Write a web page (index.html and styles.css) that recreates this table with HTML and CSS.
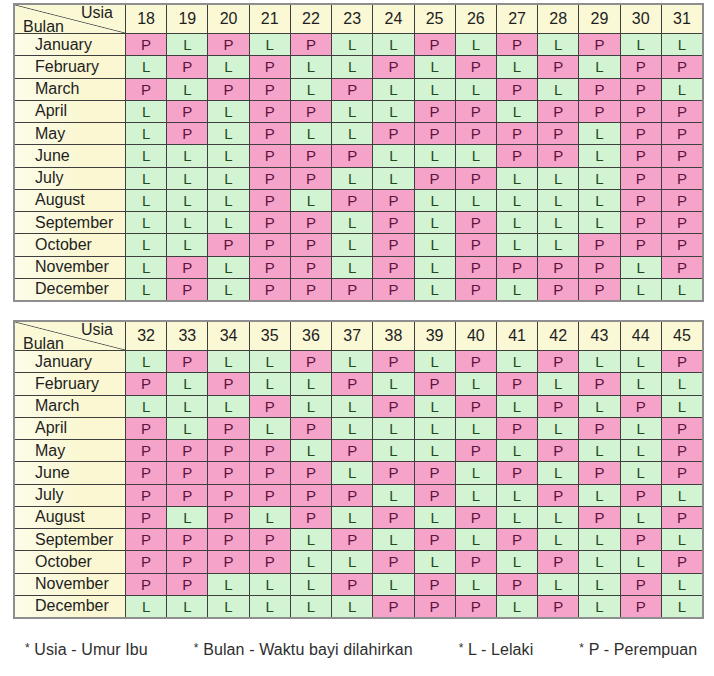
FILE: index.html
```html
<!DOCTYPE html>
<html>
<head>
<meta charset="utf-8">
<link rel="stylesheet" href="styles.css">
</head>
<body>
<div class="page">
  <div class="chart">
    <div class="corner"><span class="usia">Usia</span><span class="bulan">Bulan</span></div>
    <div class="age">18</div><div class="age">19</div><div class="age">20</div><div class="age">21</div><div class="age">22</div><div class="age">23</div><div class="age">24</div><div class="age">25</div><div class="age">26</div><div class="age">27</div><div class="age">28</div><div class="age">29</div><div class="age">30</div><div class="age">31</div>
    <div class="month">January</div><div class="p">P</div><div class="l">L</div><div class="p">P</div><div class="l">L</div><div class="p">P</div><div class="l">L</div><div class="l">L</div><div class="p">P</div><div class="l">L</div><div class="p">P</div><div class="l">L</div><div class="p">P</div><div class="l">L</div><div class="l">L</div>
    <div class="month">February</div><div class="l">L</div><div class="p">P</div><div class="l">L</div><div class="p">P</div><div class="l">L</div><div class="l">L</div><div class="p">P</div><div class="l">L</div><div class="p">P</div><div class="l">L</div><div class="p">P</div><div class="l">L</div><div class="p">P</div><div class="p">P</div>
    <div class="month">March</div><div class="p">P</div><div class="l">L</div><div class="p">P</div><div class="p">P</div><div class="l">L</div><div class="p">P</div><div class="l">L</div><div class="l">L</div><div class="l">L</div><div class="p">P</div><div class="l">L</div><div class="p">P</div><div class="p">P</div><div class="l">L</div>
    <div class="month">April</div><div class="l">L</div><div class="p">P</div><div class="l">L</div><div class="p">P</div><div class="p">P</div><div class="l">L</div><div class="l">L</div><div class="p">P</div><div class="p">P</div><div class="l">L</div><div class="p">P</div><div class="p">P</div><div class="p">P</div><div class="p">P</div>
    <div class="month">May</div><div class="l">L</div><div class="p">P</div><div class="l">L</div><div class="p">P</div><div class="l">L</div><div class="l">L</div><div class="p">P</div><div class="p">P</div><div class="p">P</div><div class="p">P</div><div class="p">P</div><div class="l">L</div><div class="p">P</div><div class="p">P</div>
    <div class="month">June</div><div class="l">L</div><div class="l">L</div><div class="l">L</div><div class="p">P</div><div class="p">P</div><div class="p">P</div><div class="l">L</div><div class="l">L</div><div class="l">L</div><div class="p">P</div><div class="p">P</div><div class="l">L</div><div class="p">P</div><div class="p">P</div>
    <div class="month">July</div><div class="l">L</div><div class="l">L</div><div class="l">L</div><div class="p">P</div><div class="p">P</div><div class="l">L</div><div class="l">L</div><div class="p">P</div><div class="p">P</div><div class="l">L</div><div class="l">L</div><div class="l">L</div><div class="p">P</div><div class="p">P</div>
    <div class="month">August</div><div class="l">L</div><div class="l">L</div><div class="l">L</div><div class="p">P</div><div class="l">L</div><div class="p">P</div><div class="p">P</div><div class="l">L</div><div class="l">L</div><div class="l">L</div><div class="l">L</div><div class="l">L</div><div class="p">P</div><div class="p">P</div>
    <div class="month">September</div><div class="l">L</div><div class="l">L</div><div class="l">L</div><div class="p">P</div><div class="p">P</div><div class="l">L</div><div class="p">P</div><div class="l">L</div><div class="p">P</div><div class="l">L</div><div class="l">L</div><div class="l">L</div><div class="p">P</div><div class="p">P</div>
    <div class="month">October</div><div class="l">L</div><div class="l">L</div><div class="p">P</div><div class="p">P</div><div class="p">P</div><div class="l">L</div><div class="p">P</div><div class="l">L</div><div class="p">P</div><div class="l">L</div><div class="l">L</div><div class="p">P</div><div class="p">P</div><div class="p">P</div>
    <div class="month">November</div><div class="l">L</div><div class="p">P</div><div class="l">L</div><div class="p">P</div><div class="p">P</div><div class="l">L</div><div class="p">P</div><div class="l">L</div><div class="p">P</div><div class="p">P</div><div class="p">P</div><div class="p">P</div><div class="l">L</div><div class="p">P</div>
    <div class="month">December</div><div class="l">L</div><div class="p">P</div><div class="l">L</div><div class="p">P</div><div class="p">P</div><div class="p">P</div><div class="p">P</div><div class="l">L</div><div class="p">P</div><div class="l">L</div><div class="p">P</div><div class="p">P</div><div class="l">L</div><div class="l">L</div>
  </div>

  <div class="chart second">
    <div class="corner"><span class="usia">Usia</span><span class="bulan">Bulan</span></div>
    <div class="age">32</div><div class="age">33</div><div class="age">34</div><div class="age">35</div><div class="age">36</div><div class="age">37</div><div class="age">38</div><div class="age">39</div><div class="age">40</div><div class="age">41</div><div class="age">42</div><div class="age">43</div><div class="age">44</div><div class="age">45</div>
    <div class="month">January</div><div class="l">L</div><div class="p">P</div><div class="l">L</div><div class="l">L</div><div class="p">P</div><div class="l">L</div><div class="p">P</div><div class="l">L</div><div class="p">P</div><div class="l">L</div><div class="p">P</div><div class="l">L</div><div class="l">L</div><div class="p">P</div>
    <div class="month">February</div><div class="p">P</div><div class="l">L</div><div class="p">P</div><div class="l">L</div><div class="l">L</div><div class="p">P</div><div class="l">L</div><div class="p">P</div><div class="l">L</div><div class="p">P</div><div class="l">L</div><div class="p">P</div><div class="l">L</div><div class="l">L</div>
    <div class="month">March</div><div class="l">L</div><div class="l">L</div><div class="l">L</div><div class="p">P</div><div class="l">L</div><div class="l">L</div><div class="p">P</div><div class="l">L</div><div class="p">P</div><div class="l">L</div><div class="p">P</div><div class="l">L</div><div class="p">P</div><div class="l">L</div>
    <div class="month">April</div><div class="p">P</div><div class="l">L</div><div class="p">P</div><div class="l">L</div><div class="p">P</div><div class="l">L</div><div class="l">L</div><div class="l">L</div><div class="l">L</div><div class="p">P</div><div class="l">L</div><div class="p">P</div><div class="l">L</div><div class="p">P</div>
    <div class="month">May</div><div class="p">P</div><div class="p">P</div><div class="p">P</div><div class="p">P</div><div class="l">L</div><div class="p">P</div><div class="l">L</div><div class="l">L</div><div class="p">P</div><div class="l">L</div><div class="p">P</div><div class="l">L</div><div class="l">L</div><div class="p">P</div>
    <div class="month">June</div><div class="p">P</div><div class="p">P</div><div class="p">P</div><div class="p">P</div><div class="p">P</div><div class="l">L</div><div class="p">P</div><div class="p">P</div><div class="l">L</div><div class="p">P</div><div class="l">L</div><div class="p">P</div><div class="l">L</div><div class="p">P</div>
    <div class="month">July</div><div class="p">P</div><div class="p">P</div><div class="p">P</div><div class="p">P</div><div class="p">P</div><div class="p">P</div><div class="l">L</div><div class="p">P</div><div class="l">L</div><div class="l">L</div><div class="p">P</div><div class="l">L</div><div class="p">P</div><div class="l">L</div>
    <div class="month">August</div><div class="p">P</div><div class="l">L</div><div class="p">P</div><div class="l">L</div><div class="p">P</div><div class="l">L</div><div class="p">P</div><div class="l">L</div><div class="p">P</div><div class="l">L</div><div class="l">L</div><div class="p">P</div><div class="l">L</div><div class="p">P</div>
    <div class="month">September</div><div class="p">P</div><div class="p">P</div><div class="p">P</div><div class="p">P</div><div class="l">L</div><div class="p">P</div><div class="l">L</div><div class="p">P</div><div class="l">L</div><div class="p">P</div><div class="l">L</div><div class="l">L</div><div class="p">P</div><div class="l">L</div>
    <div class="month">October</div><div class="p">P</div><div class="p">P</div><div class="p">P</div><div class="p">P</div><div class="l">L</div><div class="l">L</div><div class="p">P</div><div class="l">L</div><div class="p">P</div><div class="l">L</div><div class="p">P</div><div class="l">L</div><div class="l">L</div><div class="p">P</div>
    <div class="month">November</div><div class="p">P</div><div class="p">P</div><div class="l">L</div><div class="l">L</div><div class="l">L</div><div class="p">P</div><div class="l">L</div><div class="p">P</div><div class="l">L</div><div class="p">P</div><div class="l">L</div><div class="l">L</div><div class="p">P</div><div class="l">L</div>
    <div class="month">December</div><div class="l">L</div><div class="l">L</div><div class="l">L</div><div class="l">L</div><div class="l">L</div><div class="l">L</div><div class="p">P</div><div class="p">P</div><div class="p">P</div><div class="l">L</div><div class="p">P</div><div class="l">L</div><div class="p">P</div><div class="l">L</div>
  </div>

  <div class="legend">
    <span class="item"><span class="star">*</span> Usia - Umur Ibu</span>
    <span class="item"><span class="star">*</span> Bulan - Waktu bayi dilahirkan</span>
    <span class="item"><span class="star">*</span> L - Lelaki</span>
    <span class="item"><span class="star">*</span> P - Perempuan</span>
  </div>
</div>
</body>
</html>
```

FILE: styles.css
```css
html, body {
  margin: 0;
  padding: 0;
  background: #ffffff;
}

.page {
  padding: 3px 0 0 13px;
  font-family: "Liberation Sans", Arial, sans-serif;
  color: #1e1e1e;
}

.chart {
  width: 687px;
  display: grid;
  grid-template-columns: 110px repeat(14, 1fr);
  grid-template-rows: 28px repeat(12, 21.25px);
  gap: 1px;
  background: #3f3f3f;
  border: 2px solid #8e8e8e;
}

.chart.second {
  margin-top: 18px;
}

.chart > div {
  display: flex;
  align-items: center;
  font-size: 16px;
}

.corner {
  flex-direction: column;
  justify-content: space-between;
  align-items: stretch !important;
  padding: 1px 12px 0 8px;
  background-color: #fbf8d6;
  background-image: linear-gradient(to top right, transparent calc(50% - 0.8px), #555555 50%, transparent calc(50% + 0.8px));
}

.corner span {
  line-height: 14px;
  font-size: 16px;
}

.usia {
  align-self: flex-end;
}

.bulan {
  align-self: flex-start;
}

.age {
  justify-content: center;
  background: #fbf8d6;
  color: #1e1e1e;
}

.month {
  padding-left: 20px;
  background: linear-gradient(to right, #fdfce9, #faf7d2 60%, #faf7d2);
  color: #1e1e1e;
}

.chart > .p,
.chart > .l {
  justify-content: center;
  font-size: 15px;
}

.p {
  background: #f6a3c9;
  color: #5c1340;
}

.l {
  background: #d2f4d2;
  color: #1f4a1f;
}

.legend {
  display: flex;
  gap: 46px;
  padding: 22px 0 0 12px;
  font-size: 16px;
  letter-spacing: 0.1px;
  color: #2e2e2e;
}

.star {
  font-size: 12px;
  vertical-align: 3px;
}
```
